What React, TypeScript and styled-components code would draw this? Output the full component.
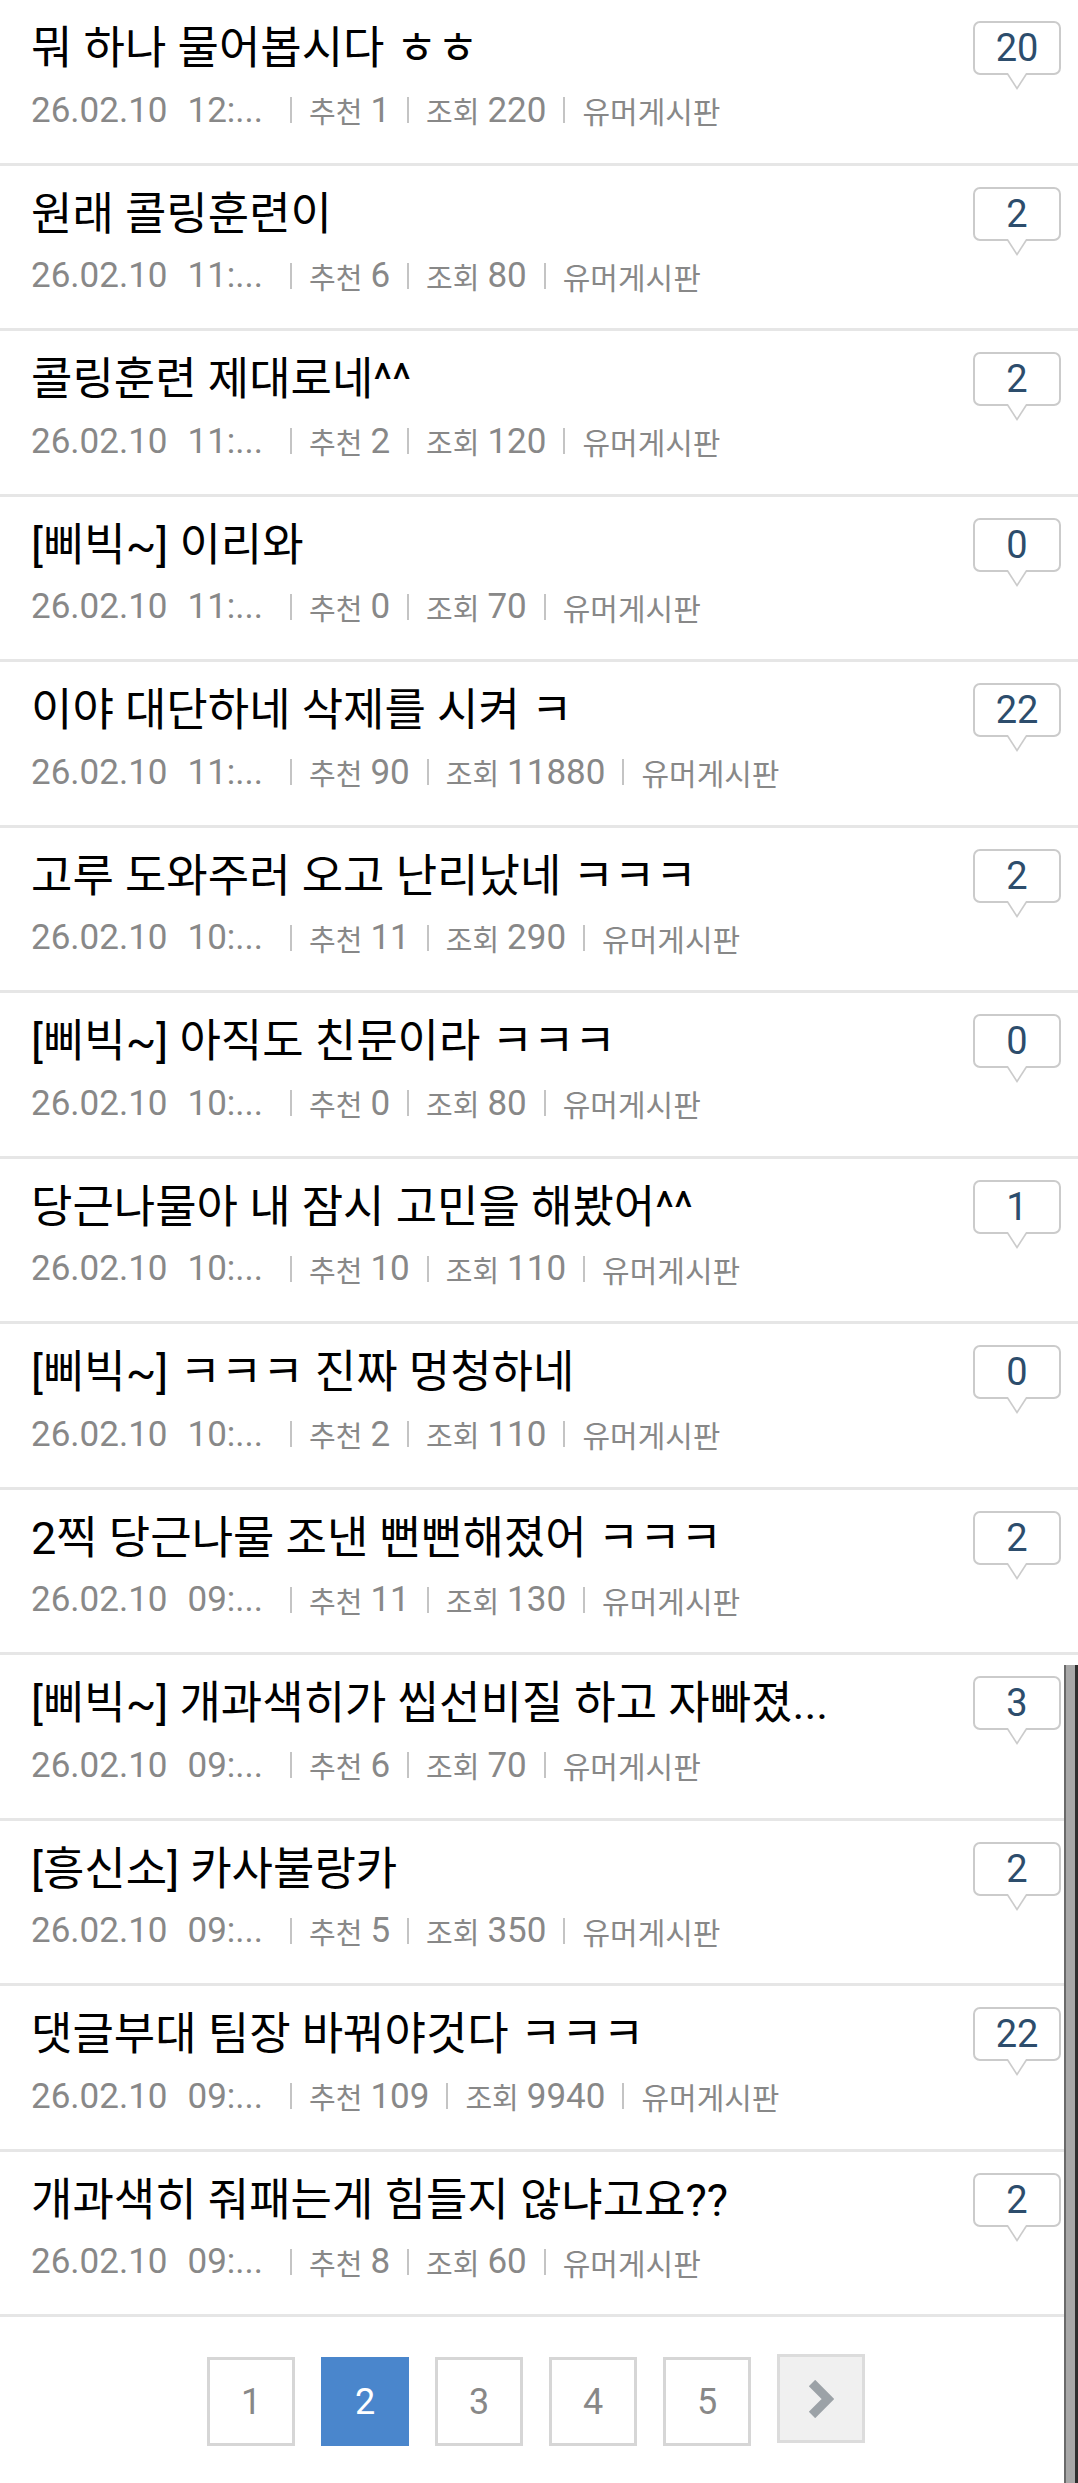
import React from "react";
import styled, { createGlobalStyle } from "styled-components";

const POSTS = [
  { title: "뭐 하나 물어봅시다 ㅎㅎ", time: "12", like: 1, view: 220, reply: 20 },
  { title: "원래 콜링훈련이", time: "11", like: 6, view: 80, reply: 2 },
  { title: "콜링훈련 제대로네^^", time: "11", like: 2, view: 120, reply: 2 },
  { title: "[삐빅~] 이리와", time: "11", like: 0, view: 70, reply: 0 },
  { title: "이야 대단하네 삭제를 시켜 ㅋ", time: "11", like: 90, view: 11880, reply: 22 },
  { title: "고루 도와주러 오고 난리났네 ㅋㅋㅋ", time: "10", like: 11, view: 290, reply: 2 },
  { title: "[삐빅~] 아직도 친문이라 ㅋㅋㅋ", time: "10", like: 0, view: 80, reply: 0 },
  { title: "당근나물아 내 잠시 고민을 해봤어^^", time: "10", like: 10, view: 110, reply: 1 },
  { title: "[삐빅~] ㅋㅋㅋ 진짜 멍청하네", time: "10", like: 2, view: 110, reply: 0 },
  { title: "2찍 당근나물 조낸 뻔뻔해졌어 ㅋㅋㅋ", time: "09", like: 11, view: 130, reply: 2 },
  { title: "[삐빅~] 개과색히가 씹선비질 하고 자빠졌...", time: "09", like: 6, view: 70, reply: 3 },
  { title: "[흥신소] 카사불랑카", time: "09", like: 5, view: 350, reply: 2 },
  { title: "댓글부대 팀장 바꿔야것다 ㅋㅋㅋ", time: "09", like: 109, view: 9940, reply: 22 },
  { title: "개과색히 줘패는게 힘들지 않냐고요??", time: "09", like: 8, view: 60, reply: 2 },
];

const PAGES = [1, 2, 3, 4, 5];

const App = () => {
  return (
    <Page>
      <GlobalStyle />
      <List>
        {POSTS.map((post, index) => (
          <Row key={index}>
            <Info>
              <Title>{post.title}</Title>
              <Meta>
                <span>26.02.10</span>
                <Time>{post.time}:...</Time>
                <Sep />
                <Label>추천</Label>
                <span>{post.like}</span>
                <Sep />
                <Label>조회</Label>
                <span>{post.view}</span>
                <Sep />
                <Board>유머게시판</Board>
              </Meta>
            </Info>
            <Bubble>{post.reply}</Bubble>
          </Row>
        ))}
      </List>
      <Pager>
        {PAGES.map((num) => (
          <PageBox key={num} $active={num === 2}>
            {num}
          </PageBox>
        ))}
        <NextBox>
          <svg width="26" height="38" viewBox="0 0 26 38">
            <polyline
              points="4,3 20,19 4,35"
              fill="none"
              stroke="#9ca2a7"
              strokeWidth="9"
              strokeLinejoin="miter"
            />
          </svg>
        </NextBox>
      </Pager>
      <Scrollbar />
    </Page>
  );
};

const GlobalStyle = createGlobalStyle`
  html, body {
    margin: 0;
    padding: 0;
    background: #fff;
  }
  body {
    font-family: Roboto, "Noto Sans CJK KR", sans-serif;
  }
`;

const Page = styled.div`
  position: relative;
  width: 1078px;
  min-height: 2483px;
  background: #fff;
  overflow: hidden;
`;

const List = styled.div`
  display: flex;
  flex-direction: column;
`;

const Row = styled.div`
  display: flex;
  justify-content: space-between;
  align-items: flex-start;
  box-sizing: border-box;
  height: 165.5px;
  padding: 0 17px 0 31px;
  border-bottom: 3px solid #e6e6e6;
`;

const Info = styled.div`
  display: flex;
  flex-direction: column;
  padding-top: 22px;
  min-width: 0;
`;

const Title = styled.div`
  font-family: Roboto, "Noto Sans CJK KR", sans-serif;
  font-size: 45px;
  font-weight: 400;
  line-height: 54px;
  color: #000;
  white-space: nowrap;
`;

const Meta = styled.div`
  display: flex;
  align-items: center;
  margin-top: 10px;
  height: 48px;
  font-size: 35px;
  color: #888;
  white-space: nowrap;
`;

const Time = styled.span`
  margin-left: 20px;
  margin-right: 10px;
`;

const Label = styled.span`
  font-family: "Noto Sans CJK KR", sans-serif;
  font-size: 29px;
  margin-right: 8px;
`;

const Board = styled.span`
  font-family: "Noto Sans CJK KR", sans-serif;
  font-size: 30px;
`;

const Sep = styled.span`
  display: inline-block;
  width: 2px;
  height: 26px;
  margin: 0 17px;
  background: #c4c4c4;
`;

const Bubble = styled.div`
  position: relative;
  flex: none;
  display: flex;
  align-items: center;
  justify-content: center;
  box-sizing: border-box;
  width: 88px;
  height: 54px;
  margin-top: 21px;
  border: 2px solid #cbcbcb;
  border-radius: 7px;
  background: #fff;
  font-family: Roboto, Arial, sans-serif;
  font-size: 38px;
  color: #2d4d6c;

  &::before,
  &::after {
    content: "";
    position: absolute;
    left: 50%;
    top: 100%;
    transform: translateX(-50%);
    width: 0;
    height: 0;
  }
  &::before {
    border-left: 11px solid transparent;
    border-right: 11px solid transparent;
    border-top: 17px solid #cbcbcb;
  }
  &::after {
    border-left: 9px solid transparent;
    border-right: 9px solid transparent;
    border-top: 14px solid #fff;
  }
`;

const Pager = styled.div`
  display: flex;
  justify-content: center;
  align-items: flex-start;
  gap: 26px;
  height: 166px;
  box-sizing: border-box;
  padding-top: 40px;
  padding-right: 6px;
`;

const PageBox = styled.div<{ $active?: boolean }>`
  display: flex;
  align-items: center;
  justify-content: center;
  box-sizing: border-box;
  width: 88px;
  height: 89px;
  border: 3px solid ${({ $active }) => ($active ? "#4a86cc" : "#d6d6d6")};
  background: ${({ $active }) => ($active ? "#4a86cc" : "#fff")};
  color: ${({ $active }) => ($active ? "#fff" : "#888")};
  font-family: Roboto, Arial, sans-serif;
  font-size: 36px;
`;

const NextBox = styled.div`
  display: flex;
  align-items: center;
  justify-content: center;
  box-sizing: border-box;
  width: 88px;
  height: 89px;
  margin-top: -3px;
  border: 3px solid #dcdcdc;
  background: #f0f0f0;
`;

const Scrollbar = styled.div`
  position: absolute;
  top: 1665px;
  right: 0;
  bottom: 0;
  width: 9px;
  background: #a8a8a8;
  border-left: 2px solid #6a6a6a;
  border-right: 3px solid #2e2e2e;
`;

export default App;
